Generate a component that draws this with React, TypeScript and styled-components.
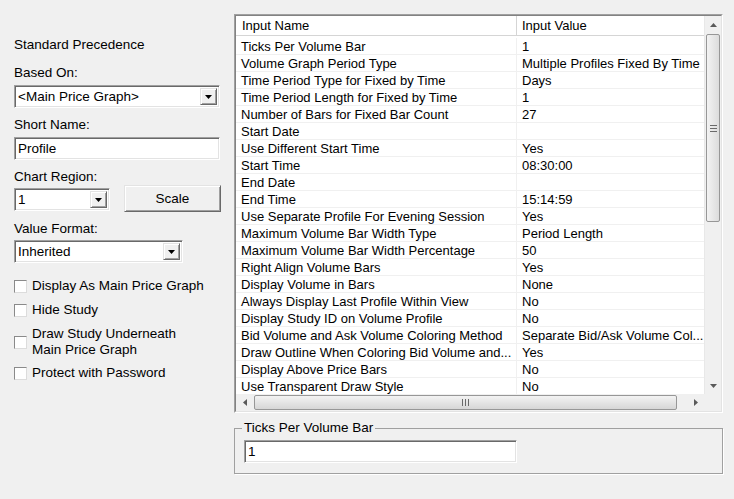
import React from 'react';
import styled, { createGlobalStyle, css } from 'styled-components';

const GlobalStyle = createGlobalStyle`
  html, body {
    margin: 0;
    padding: 0;
    background: #f0f0f0;
  }
  body {
    font-family: "Liberation Sans", Arial, sans-serif;
    font-size: 13.5px;
    color: #000;
  }
  * {
    box-sizing: border-box;
  }
`;

const sunken = css`
  border-style: solid;
  border-width: 1px;
  border-color: #a0a0a0 #ffffff #ffffff #a0a0a0;
  box-shadow: inset 1px 1px 0 #696969, inset -1px -1px 0 #e3e3e3;
`;

const raised = css`
  border-style: solid;
  border-width: 1px;
  border-color: #e3e3e3 #696969 #696969 #e3e3e3;
  box-shadow: inset 1px 1px 0 #ffffff, inset -1px -1px 0 #a0a0a0;
`;

const Page = styled.div`
  display: flex;
  gap: 13px;
  width: 734px;
  height: 499px;
  padding-left: 14px;
  overflow: hidden;
`;

const Sidebar = styled.div`
  width: 207px;
  padding-top: 37px;
  display: flex;
  flex-direction: column;
`;

const Label = styled.div<{ $mt?: number }>`
  line-height: 16px;
  margin-top: ${({ $mt }) => $mt ?? 0}px;
  white-space: nowrap;
`;

const Combo = styled.div<{ $w: number; $h?: number; $mt?: number }>`
  ${sunken}
  display: flex;
  align-items: stretch;
  width: ${({ $w }) => $w}px;
  height: ${({ $h }) => $h ?? 23}px;
  margin-top: ${({ $mt }) => $mt ?? 0}px;
  padding: 2px 2px 2px 3px;
  background: #fff;
`;

const ComboText = styled.span`
  flex: 1;
  display: flex;
  align-items: center;
  white-space: nowrap;
  overflow: hidden;
`;

const DropButton = styled.span`
  ${raised}
  width: 17px;
  flex: none;
  display: flex;
  align-items: center;
  justify-content: center;
  background: #f0f0f0;
`;

const TextBox = styled.div<{ $w: number; $mt?: number }>`
  ${sunken}
  display: flex;
  align-items: center;
  width: ${({ $w }) => $w}px;
  height: 23px;
  margin-top: ${({ $mt }) => $mt ?? 0}px;
  padding: 0 3px;
  background: #fff;
  white-space: nowrap;
`;

const ControlRow = styled.div`
  display: flex;
  align-items: flex-start;
  gap: 14px;
`;

const PushButton = styled.button`
  ${raised}
  width: 97px;
  height: 27px;
  padding: 0;
  margin-left: auto;
  background: #f0f0f0;
  font: inherit;
  color: #000;
`;

const CheckRow = styled.label<{ $mt: number }>`
  display: flex;
  align-items: center;
  gap: 5px;
  margin-top: ${({ $mt }) => $mt}px;
  line-height: 16px;
`;

const CheckBox = styled.span`
  width: 13px;
  height: 13px;
  flex: none;
  background: #fff;
  border: 1px solid;
  border-color: #8a8a8a #dcdcdc #dcdcdc #8a8a8a;
`;

const Main = styled.div`
  width: 489px;
  padding-top: 14px;
  display: flex;
  flex-direction: column;
`;

const ListFrame = styled.div`
  height: 399px;
  border: 1px solid;
  border-color: #a0a0a0 #ffffff #ffffff #a0a0a0;
`;

const ListView = styled.div`
  height: 100%;
  border: 1px solid;
  border-color: #828282 #e3e3e3 #e3e3e3 #828282;
  display: grid;
  grid-template-columns: 1fr 17px;
  grid-template-rows: 1fr 17px;
  background: #fff;
  overflow: hidden;
  font-size: 13px;
`;

const Rows = styled.div`
  overflow: hidden;
  display: flex;
  flex-direction: column;
`;

const HeaderRow = styled.div`
  display: grid;
  grid-template-columns: 281px 1fr;
  height: 20px;
  flex: none;
  border-bottom: 1px solid #d5d5d5;
  margin-bottom: 2px;
`;

const HeaderCell = styled.div`
  display: flex;
  align-items: center;
  padding-left: 6px;
  border-right: 1px solid #d5d5d5;
  white-space: nowrap;
  overflow: hidden;
  &:last-child {
    padding-left: 5px;
    border-right: none;
  }
`;

const DataRow = styled.div`
  display: grid;
  grid-template-columns: 281px 1fr;
  height: 17px;
  flex: none;
  border-bottom: 1px solid #f0f0f0;
`;

const Cell = styled.div`
  display: flex;
  align-items: center;
  padding-left: 5px;
  border-right: 1px solid #f0f0f0;
  white-space: nowrap;
  overflow: hidden;
  &:last-child {
    border-right: none;
  }
`;

const ScrollBar = styled.div<{ $vertical?: boolean }>`
  display: flex;
  flex-direction: ${({ $vertical }) => ($vertical ? 'column' : 'row')};
  background: #f0f0f0;
  border-left: ${({ $vertical }) => ($vertical ? '1px solid #e8e8e8' : 'none')};
`;

const ArrowButton = styled.div`
  width: 17px;
  height: 17px;
  flex: none;
  display: flex;
  align-items: center;
  justify-content: center;
`;

const Thumb = styled.div<{ $vertical?: boolean; $size: number }>`
  flex: none;
  display: flex;
  align-items: center;
  justify-content: center;
  border: 1px solid #979797;
  border-radius: 2px;
  ${({ $vertical, $size }) =>
    $vertical
      ? css`
          height: ${$size}px;
          margin: 1px 1px 0 1px;
          background: linear-gradient(to right, #f3f3f3, #dcdcdc);
        `
      : css`
          width: ${$size}px;
          margin: 1px 0 1px 1px;
          background: linear-gradient(to bottom, #f3f3f3, #d6d6d6);
        `}
`;

const Corner = styled.div`
  background: #f0f0f0;
`;

const GroupBox = styled.fieldset`
  margin: 7px 0 0 0;
  padding: 0 9px 10px 9px;
  min-inline-size: 0;
  border: 1px solid #a0a0a0;
  box-shadow: 1px 1px 0 #ffffff;
`;

const GroupLegend = styled.legend`
  padding: 0 2px;
  margin-left: -2px;
  line-height: 16px;
`;

function DownArrow({ color = '#000' }: { color?: string }) {
  return (
    <svg width="7" height="4" viewBox="0 0 7 4">
      <path d="M0 0h7L3.5 4z" fill={color} />
    </svg>
  );
}

function ScrollArrow({ dir }: { dir: 'up' | 'down' | 'left' | 'right' }) {
  const paths = {
    up: 'M0 4h7L3.5 0z',
    down: 'M0 0h7L3.5 4z',
    left: 'M4 0v7L0 3.5z',
    right: 'M0 0v7L4 3.5z',
  };
  const vertical = dir === 'up' || dir === 'down';
  return (
    <svg
      width={vertical ? 7 : 4}
      height={vertical ? 4 : 7}
      viewBox={vertical ? '0 0 7 4' : '0 0 4 7'}
    >
      <path d={paths[dir]} fill="#5a5a5a" />
    </svg>
  );
}

function Grip({ vertical }: { vertical?: boolean }) {
  return vertical ? (
    <svg width="7" height="7" viewBox="0 0 7 7">
      <path d="M0 0.5h7M0 3.5h7M0 6.5h7" stroke="#6a6a6a" strokeWidth="1" />
    </svg>
  ) : (
    <svg width="7" height="7" viewBox="0 0 7 7">
      <path d="M0.5 0v7M3.5 0v7M6.5 0v7" stroke="#6a6a6a" strokeWidth="1" />
    </svg>
  );
}

const inputs: [string, string][] = [
  ['Ticks Per Volume Bar', '1'],
  ['Volume Graph Period Type', 'Multiple Profiles Fixed By Time'],
  ['Time Period Type for Fixed by Time', 'Days'],
  ['Time Period Length for Fixed by Time', '1'],
  ['Number of Bars for Fixed Bar Count', '27'],
  ['Start Date', ''],
  ['Use Different Start Time', 'Yes'],
  ['Start Time', '08:30:00'],
  ['End Date', ''],
  ['End Time', '15:14:59'],
  ['Use Separate Profile For Evening Session', 'Yes'],
  ['Maximum Volume Bar Width Type', 'Period Length'],
  ['Maximum Volume Bar Width Percentage', '50'],
  ['Right Align Volume Bars', 'Yes'],
  ['Display Volume in Bars', 'None'],
  ['Always Display Last Profile Within View', 'No'],
  ['Display Study ID on Volume Profile', 'No'],
  ['Bid Volume and Ask Volume Coloring Method', 'Separate Bid/Ask Volume Col...'],
  ['Draw Outline When Coloring Bid Volume and...', 'Yes'],
  ['Display Above Price Bars', 'No'],
  ['Use Transparent Draw Style', 'No'],
];

function Dropdown({ value, width, mt }: { value: string; width: number; mt?: number }) {
  return (
    <Combo $w={width} $mt={mt}>
      <ComboText>{value}</ComboText>
      <DropButton>
        <DownArrow />
      </DropButton>
    </Combo>
  );
}

function Check({ children, mt }: { children: React.ReactNode; mt: number }) {
  return (
    <CheckRow $mt={mt}>
      <CheckBox />
      <span>{children}</span>
    </CheckRow>
  );
}

export default function App() {
  return (
    <>
      <GlobalStyle />
      <Page>
        <Sidebar>
          <Label>Standard Precedence</Label>
          <Label $mt={12}>Based On:</Label>
          <Dropdown value="<Main Price Graph>" width={206} mt={4} />
          <Label $mt={9}>Short Name:</Label>
          <TextBox $w={206} $mt={4}>Profile</TextBox>
          <Label $mt={9}>Chart Region:</Label>
          <ControlRow>
            <Dropdown value="1" width={96} mt={3} />
            <PushButton>Scale</PushButton>
          </ControlRow>
          <Label $mt={9}>Value Format:</Label>
          <Dropdown value="Inherited" width={169} mt={3} />
          <Check mt={15}>Display As Main Price Graph</Check>
          <Check mt={8}>Hide Study</Check>
          <Check mt={8}>
            Draw Study Underneath
            <br />
            Main Price Graph
          </Check>
          <Check mt={7}>Protect with Password</Check>
        </Sidebar>
        <Main>
          <ListFrame>
            <ListView>
              <Rows>
                <HeaderRow>
                  <HeaderCell>Input Name</HeaderCell>
                  <HeaderCell>Input Value</HeaderCell>
                </HeaderRow>
                {inputs.map(([name, value]) => (
                  <DataRow key={name}>
                    <Cell>{name}</Cell>
                    <Cell>{value}</Cell>
                  </DataRow>
                ))}
              </Rows>
              <ScrollBar $vertical>
                <ArrowButton>
                  <ScrollArrow dir="up" />
                </ArrowButton>
                <Thumb $vertical $size={188}>
                  <Grip vertical />
                </Thumb>
                <div style={{ flex: 1 }} />
                <ArrowButton>
                  <ScrollArrow dir="down" />
                </ArrowButton>
              </ScrollBar>
              <ScrollBar>
                <ArrowButton>
                  <ScrollArrow dir="left" />
                </ArrowButton>
                <Thumb $size={423}>
                  <Grip />
                </Thumb>
                <div style={{ flex: 1 }} />
                <ArrowButton>
                  <ScrollArrow dir="right" />
                </ArrowButton>
              </ScrollBar>
              <Corner />
            </ListView>
          </ListFrame>
          <GroupBox>
            <GroupLegend>Ticks Per Volume Bar</GroupLegend>
            <TextBox $w={273} $mt={4}>1</TextBox>
          </GroupBox>
        </Main>
      </Page>
    </>
  );
}
